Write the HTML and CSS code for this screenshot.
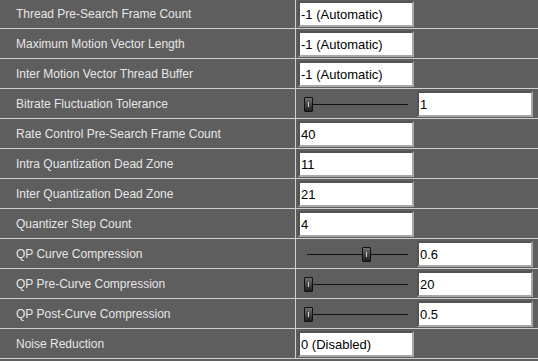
FILE: index.html
```html
<!DOCTYPE html>
<html lang="en">
<head>
    <meta charset="UTF-8">
    <title>Encoder Settings</title>
    <link rel="stylesheet" href="styles.css">
</head>
<body>

<div class="settings">
    <div class="row">
        <div class="label">Thread Pre-Search Frame Count</div>
        <div class="value"><input class="field" type="text" value="-1 (Automatic)"></div>
    </div>
    <div class="row">
        <div class="label">Maximum Motion Vector Length</div>
        <div class="value"><input class="field" type="text" value="-1 (Automatic)"></div>
    </div>
    <div class="row">
        <div class="label">Inter Motion Vector Thread Buffer</div>
        <div class="value"><input class="field" type="text" value="-1 (Automatic)"></div>
    </div>
    <div class="row">
        <div class="label">Bitrate Fluctuation Tolerance</div>
        <div class="value">
            <div class="slider"><div class="track"></div><div class="thumb" style="left: 0%"></div></div>
            <input class="field" type="text" value="1">
        </div>
    </div>
    <div class="row">
        <div class="label">Rate Control Pre-Search Frame Count</div>
        <div class="value"><input class="field" type="text" value="40"></div>
    </div>
    <div class="row">
        <div class="label">Intra Quantization Dead Zone</div>
        <div class="value"><input class="field" type="text" value="11"></div>
    </div>
    <div class="row">
        <div class="label">Inter Quantization Dead Zone</div>
        <div class="value"><input class="field" type="text" value="21"></div>
    </div>
    <div class="row">
        <div class="label">Quantizer Step Count</div>
        <div class="value"><input class="field" type="text" value="4"></div>
    </div>
    <div class="row">
        <div class="label">QP Curve Compression</div>
        <div class="value">
            <div class="slider"><div class="track"></div><div class="thumb" style="left: 56%"></div></div>
            <input class="field" type="text" value="0.6">
        </div>
    </div>
    <div class="row">
        <div class="label">QP Pre-Curve Compression</div>
        <div class="value">
            <div class="slider"><div class="track"></div><div class="thumb" style="left: 0%"></div></div>
            <input class="field" type="text" value="20">
        </div>
    </div>
    <div class="row">
        <div class="label">QP Post-Curve Compression</div>
        <div class="value">
            <div class="slider"><div class="track"></div><div class="thumb" style="left: 0%"></div></div>
            <input class="field" type="text" value="0.5">
        </div>
    </div>
    <div class="row">
        <div class="label">Noise Reduction</div>
        <div class="value"><input class="field" type="text" value="0 (Disabled)"></div>
    </div>
</div>

</body>
</html>
```

FILE: styles.css
```css
body {
    margin: 0;
    padding: 0;
    background-color: #5e5e5e;
    font-family: "Liberation Sans", Arial, sans-serif;
    font-size: 12px;
    overflow: hidden;
}
.settings {
    margin-top: -1px;
}
.row {
    display: grid;
    grid-template-columns: 296px 1fr;
    height: 29px;
    border-bottom: 1px solid #d0d0d0;
}
.label {
    border-right: 1px solid #d0d0d0;
    padding-left: 16px;
    color: #e6e6e6;
    display: flex;
    align-items: center;
}
.value {
    display: flex;
    align-items: center;
    padding-left: 2px;
}
.field {
    box-sizing: border-box;
    width: 116px;
    height: 26px;
    margin: 1px 0 0 0;
    padding: 0 0 0 1px;
    border: 2px inset #a8a8a8;
    background: #fff;
    color: #000;
    font-family: "Liberation Sans", Arial, sans-serif;
    font-size: 13px;
    outline: none;
}
.slider {
    position: relative;
    width: 104px;
    height: 16px;
    margin: 0 9px 0 6px;
}
.track {
    position: absolute;
    left: 3px;
    right: 0;
    top: 8px;
    height: 1px;
    background: #111;
}
.thumb {
    position: absolute;
    top: 1px;
    width: 7px;
    height: 13px;
    border: 1px solid #111;
    border-radius: 1px;
    background: linear-gradient(to bottom, #6e6e6e, #1e1e1e);
}
.thumb::after {
    content: "";
    position: absolute;
    left: 3px;
    top: 4px;
    width: 1px;
    height: 5px;
    background: #cfcfcf;
}
```
